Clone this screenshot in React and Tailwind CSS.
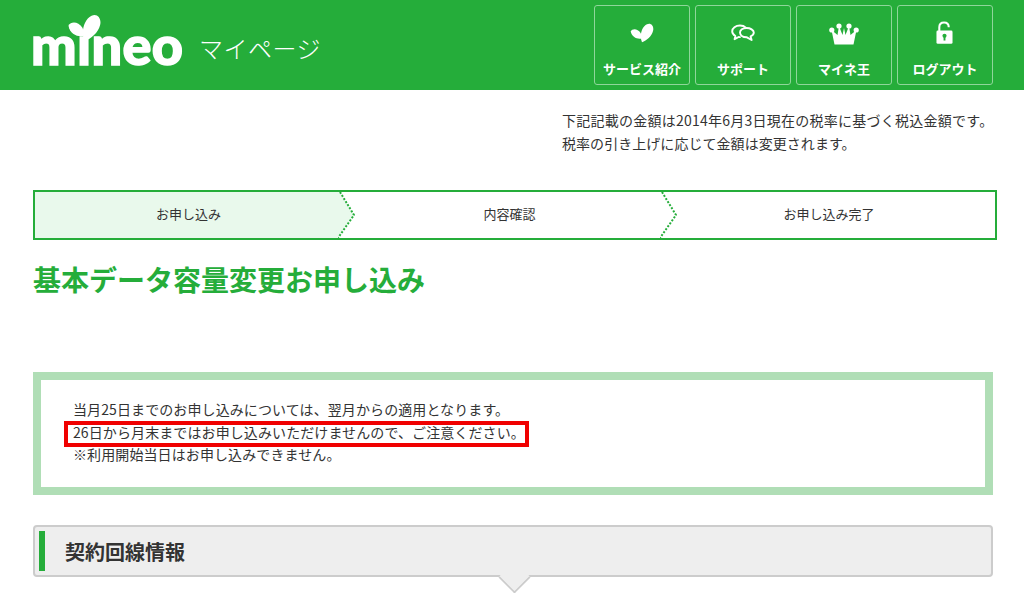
const FONT = "font-['Noto_Sans_CJK_JP','Noto_Sans',sans-serif]";

function DropIcon({ className }) {
  return (
    <svg viewBox="0 0 70 60" className={className} fill="white">
      <path d="M35 58C27 40 33 12 50 4C62 -2 72 10 68 24C64 40 49 52 35 58Z" />
      <path d="M1 25C6 16 21 15 31 30C33 36 33 42 32 47C19 49 4 42 1 25Z" />
    </svg>
  );
}

function ChatIcon() {
  return (
    <svg viewBox="0 0 24 18" className="h-[18px] w-6" fill="none" stroke="white" strokeWidth="1.9" strokeLinejoin="round">
      <path d="M9 1.5C4.6 1.5 1.2 4 1.2 7.3C1.2 9.4 2.6 11 4.4 12L3.6 15.2L7.6 13C8.3 13.1 9 13.1 9.6 13" />
      <path d="M9 1.5C11.5 1.5 13.5 2.3 14.8 3.6" />
      <path d="M15.5 4C11.8 4 9 6 9 8.6C9 11.2 11.8 13.2 15.5 13.2L20.6 16L19.6 12.4C21.6 11.6 22.8 10.2 22.8 8.6C22.8 6 19.4 4 15.5 4Z" />
    </svg>
  );
}

function CrownIcon() {
  return (
    <svg viewBox="0 0 30 22" className="mt-0.5 h-[22px] w-[30px]" fill="white">
      <circle cx="2.8" cy="7" r="2.6" />
      <circle cx="10" cy="3" r="2.6" />
      <circle cx="20" cy="3" r="2.6" />
      <circle cx="27.2" cy="7" r="2.6" />
      <path d="M2.5 7L8.5 12L10 3L13.5 12L15 5L16.5 12L20 3L21.5 12L27.5 7L24.5 21.5H5.5Z" />
    </svg>
  );
}

function LockIcon() {
  return (
    <svg viewBox="0 0 18 24" className="mr-0.5 h-[23px] w-[17px]">
      <path d="M3.5 11V6.5C3.5 3.4 5.5 1.5 8.5 1.5C11.5 1.5 13.5 3.4 13.5 6.5" fill="none" stroke="white" strokeWidth="2.2" />
      <rect x="0.5" y="10" width="17" height="14" rx="1.5" fill="white" />
      <circle cx="9" cy="15.5" r="2.2" fill="#25ad3a" />
      <rect x="8" y="16" width="2" height="4.5" fill="#25ad3a" />
    </svg>
  );
}

function NavButton({ icon, label }) {
  return (
    <a className="flex h-20 w-24 flex-col items-center rounded-[3px] border border-[#8fd69a]">
      <div className="flex h-[53px] w-full items-center justify-center">{icon}</div>
      <span className="text-[13px] leading-5 font-bold text-white">{label}</span>
    </a>
  );
}

function Chevron({ fill }) {
  return (
    <svg viewBox="0 0 17 46" className="h-[46px] w-[17px] shrink-0">
      <path d="M2 0L16 23L0 46V0Z" fill={fill} />
      <path d="M2 0L16 23L0 46" fill="none" stroke="#25ad3a" strokeWidth="2" strokeDasharray="2 1.6" />
    </svg>
  );
}

export default function App() {
  return (
    <div className={`h-[600px] w-[1024px] overflow-hidden bg-white text-[#333] ${FONT}`}>
      <header className="flex h-[90px] items-start justify-between bg-[#25ad3a] pr-[31px] pl-[33px]">
        <div className="flex items-center">
          <div className="relative h-[90px] w-[166px]">
            <span className="absolute top-[10px] left-[-2px] font-['Lato',sans-serif] text-[54px] leading-[70px] font-black tracking-[0.4px] text-white [-webkit-text-stroke:1.5px_white]">
              mıneo
            </span>
            <DropIcon className="absolute top-[13px] left-[35px] h-[30px] w-[33px]" />
          </div>
          <span className="relative top-[3px] text-[24px] leading-[90px] font-light tracking-[0.5px] text-white">マイページ</span>
        </div>
        <nav className="flex gap-[5px] pt-[5px]">
          <NavButton icon={<DropIcon className="h-5 w-6" />} label="サービス紹介" />
          <NavButton icon={<ChatIcon />} label="サポート" />
          <NavButton icon={<CrownIcon />} label="マイネ王" />
          <NavButton icon={<LockIcon />} label="ログアウト" />
        </nav>
      </header>

      <main className="pr-[27px] pl-[33px]">
        <div className="pt-[19px] pl-[529px] text-sm leading-[23px]">
          <p className="tracking-[0.25px]">下記記載の金額は2014年6月3日現在の税率に基づく税込金額です。</p>
          <p className="tracking-[0.05px]">税率の引き上げに応じて金額は変更されます。</p>
        </div>

        <ol className="mt-[35px] flex h-[50px] w-[964px] border-2 border-[#25ad3a] text-[13px]">
          <li className="flex w-[320px]">
            <div className="flex flex-1 items-center justify-center bg-[#e9f9ec] pb-0.5 pl-1">お申し込み</div>
            <Chevron fill="#e9f9ec" />
          </li>
          <li className="flex w-[322px]">
            <div className="flex flex-1 items-center justify-center pb-0.5 pl-1">内容確認</div>
            <Chevron fill="#ffffff" />
          </li>
          <li className="flex flex-1 items-center justify-center pr-[14px] pb-0.5">お申し込み完了</li>
        </ol>

        <h1 className="mt-[19px] text-[28px] leading-10 font-bold text-[#25ad3a]">基本データ容量変更お申し込み</h1>

        <div className="relative mt-[73px] w-[960px] border-8 border-[#b0deb6] px-8 pt-[18px] pb-[21px] text-sm leading-[22.5px] tracking-[0.1px]">
          <p>当月25日までのお申し込みについては、翌月からの適用となります。</p>
          <p>26日から月末まではお申し込みいただけませんので、ご注意ください。</p>
          <p>※利用開始当日はお申し込みできません。</p>
          <div className="absolute top-[41px] left-[23px] h-[26px] w-[465px] border-4 border-[#f00000]"></div>
        </div>

        <section className="relative mt-[30px] flex h-[52px] w-[960px] items-center rounded border-2 border-[#ccc] bg-[#eee] pl-1">
          <div className="h-10 w-1.5 bg-[#25ad3a]"></div>
          <h2 className="ml-5 pt-0.5 text-xl leading-10 font-bold">契約回線情報</h2>
          <div className="absolute top-[39px] left-[467.5px] h-[23px] w-[23px] rotate-45 rounded-br-[2px] border-r-2 border-b-2 border-[#ccc] bg-[#eee]"></div>
        </section>
      </main>
    </div>
  );
}
